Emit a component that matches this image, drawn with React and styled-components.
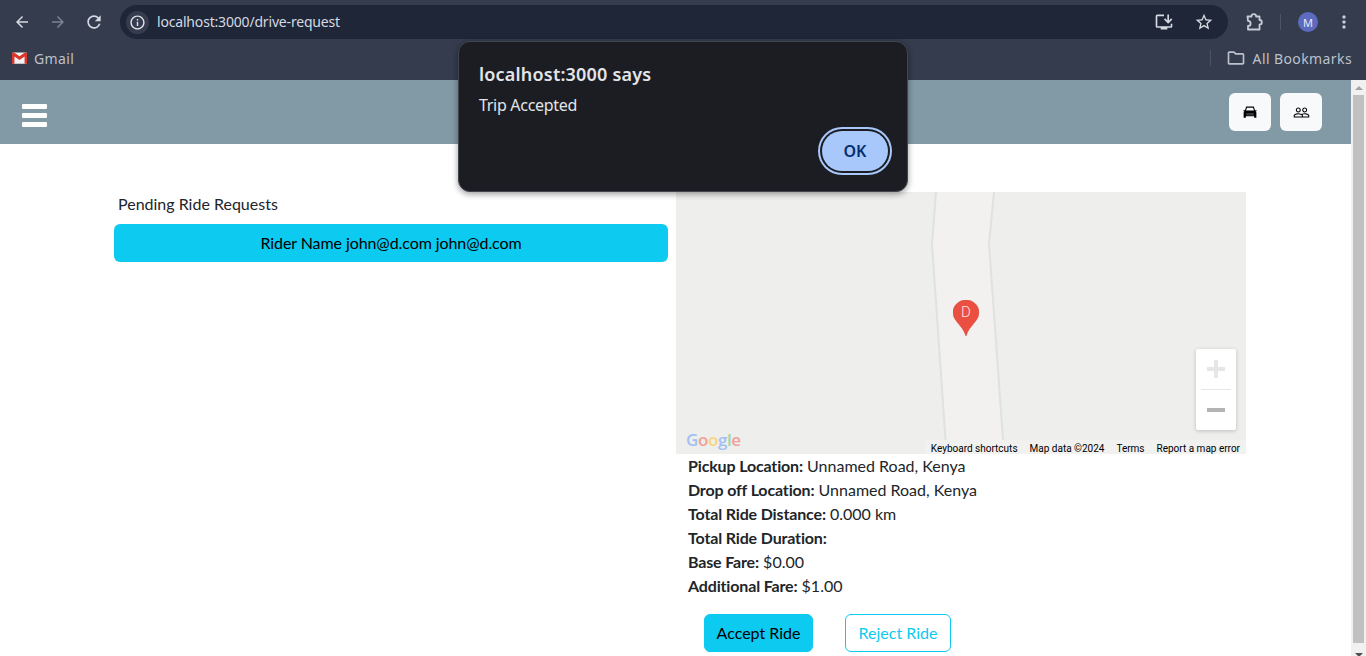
import React from 'react';
import styled, {createGlobalStyle} from 'styled-components';
import {
    MdArrowBack, MdArrowForward, MdRefresh, MdInfoOutline, MdStarBorder,
    MdMoreVert, MdOutlineFolder, MdOutlineInstallDesktop, MdPeopleOutline
} from 'react-icons/md';

const GlobalStyle = createGlobalStyle`
  html, body {
    margin: 0;
    padding: 0;
    height: 100%;
    overflow: hidden;
    background: #fff;
  }
  * {
    box-sizing: border-box;
  }
`;

const rideDetails = [
    {label: "Pickup Location:", value: "Unnamed Road, Kenya"},
    {label: "Drop off Location:", value: "Unnamed Road, Kenya"},
    {label: "Total Ride Distance:", value: "0.000 km"},
    {label: "Total Ride Duration:", value: ""},
    {label: "Base Fare:", value: "$0.00"},
    {label: "Additional Fare:", value: "$1.00"},
];

function GmailIcon() {
    return (
        <svg width="15" height="12" viewBox="0 0 16 12">
            <rect x="0" y="0" width="16" height="12" rx="1.5" fill="#f2f2f2" />
            <path d="M0 1.5 L0 12 L2.6 12 L2.6 4.4 L8 8.2 L13.4 4.4 L13.4 12 L16 12 L16 1.5 Q16 0 14.5 0 L13.8 0 L8 4.2 L2.2 0 L1.5 0 Q0 0 0 1.5 Z" fill="#d9372c" />
        </svg>
    );
}

function ExtensionIcon() {
    return (
        <svg width="20" height="20" viewBox="0 0 20 20" fill="none" stroke="currentColor" strokeWidth="1.8" strokeLinejoin="round">
            <path d="M3.5 4.5 H7.5 a2.3 2.3 0 0 1 4.6 0 H15.5 V8 a2.3 2.3 0 0 1 0 4.6 V17.5 H4 V14 a2.6 2.6 0 0 0 0 -5.2 Z" />
        </svg>
    );
}

function CarIcon() {
    return (
        <svg width="14" height="12" viewBox="0 0 15 13">
            <path d="M3.4 0.6 H11.6 L13 4.6 H14.6 V5.8 H13.6 L14.4 7 V12.6 H12 V11.2 H3 V12.6 H0.6 V7 L1.4 5.8 H0.4 V4.6 H2 Z M4.2 1.8 L3.2 4.8 H11.8 L10.8 1.8 Z" fill="#000" fillRule="evenodd" />
            <path d="M3.4 8.4 H11.6 M3.4 9.8 H11.6" stroke="#777" strokeWidth="0.7" />
        </svg>
    );
}

function Browser() {
    return (
        <Chrome>
            <Toolbar>
                <NavButton><MdArrowBack size={18} /></NavButton>
                <NavButton $disabled><MdArrowForward size={18} /></NavButton>
                <NavButton><MdRefresh size={20} /></NavButton>
                <UrlBar>
                    <InfoBadge><MdInfoOutline size={17} /></InfoBadge>
                    <UrlText>localhost:3000/drive-request</UrlText>
                    <UrlActions>
                        <MdOutlineInstallDesktop size={20} />
                        <MdStarBorder size={20} />
                    </UrlActions>
                </UrlBar>
                <ToolbarEnd>
                    <ExtensionIcon />
                    <Divider />
                    <Avatar>M</Avatar>
                    <MdMoreVert size={20} />
                </ToolbarEnd>
            </Toolbar>
            <BookmarkBar>
                <Bookmark>
                    <GmailIcon />
                    Gmail
                </Bookmark>
                <BookmarkEnd>
                    <BookmarkDivider />
                    <Bookmark>
                        <MdOutlineFolder size={20} />
                        All Bookmarks
                    </Bookmark>
                </BookmarkEnd>
            </BookmarkBar>
        </Chrome>
    );
}

function MapView() {
    return (
        <MapBox>
            <Roads viewBox="0 0 570 262" preserveAspectRatio="none">
                <path d="M260 0 L256 52 L270.5 262 L328 262 L313 52 L318 0 Z" fill="#f2f1ef" />
                <path d="M260 0 L256 52 L270.5 262" fill="none" stroke="#dfe2df" strokeWidth="2" />
                <path d="M318 0 L313 52 L328 262" fill="none" stroke="#dfe2df" strokeWidth="2" />
            </Roads>
            <Marker>
                <svg width="26" height="36" viewBox="0 0 26 36">
                    <path d="M13 0 C5.8 0 0 5.6 0 12.6 C0 21 9.5 25 13 36 C16.5 25 26 21 26 12.6 C26 5.6 20.2 0 13 0 Z" fill="#ea4f42" stroke="#d33b2e" strokeWidth="0.5" />
                </svg>
                <MarkerLabel>D</MarkerLabel>
            </Marker>
            <ZoomControl>
                <ZoomKey>
                    <svg width="18" height="18" viewBox="0 0 18 18"><path d="M7 0h4v7h7v4h-7v7H7v-7H0V7h7z" fill="#e6e6e6" /></svg>
                </ZoomKey>
                <ZoomLine />
                <ZoomKey>
                    <svg width="18" height="18" viewBox="0 0 18 18"><path d="M0 7h18v4H0z" fill="#b3b3b3" /></svg>
                </ZoomKey>
            </ZoomControl>
            <GoogleMark>
                <span style={{color: "#a3c0f4"}}>G</span>
                <span style={{color: "#f2a097"}}>o</span>
                <span style={{color: "#f7d67f"}}>o</span>
                <span style={{color: "#a3c0f4"}}>g</span>
                <span style={{color: "#9fd4a9"}}>l</span>
                <span style={{color: "#f2a097"}}>e</span>
            </GoogleMark>
            <Attribution>
                <AttrItem>Keyboard shortcuts</AttrItem>
                <AttrItem>Map data ©2024</AttrItem>
                <AttrItem>Terms</AttrItem>
                <AttrItem>Report a map error</AttrItem>
            </Attribution>
        </MapBox>
    );
}

function App() {
    return (
        <Screen>
            <GlobalStyle />
            <Browser />
            <Viewport>
                <Page>
                    <TopBar>
                        <Hamburger><i /><i /><i /></Hamburger>
                        <TopActions>
                            <IconButton><CarIcon /></IconButton>
                            <IconButton><MdPeopleOutline size={17} /></IconButton>
                        </TopActions>
                    </TopBar>
                    <Content>
                        <Requests>
                            <RequestsTitle>Pending Ride Requests</RequestsTitle>
                            <RiderButton>Rider Name john@d.com john@d.com</RiderButton>
                        </Requests>
                        <Details>
                            <MapView />
                            <DetailList>
                                {rideDetails.map(item => (
                                    <DetailRow key={item.label}>
                                        <b>{item.label}</b> {item.value}
                                    </DetailRow>
                                ))}
                            </DetailList>
                            <Actions>
                                <AcceptButton>Accept Ride</AcceptButton>
                                <RejectButton>Reject Ride</RejectButton>
                            </Actions>
                        </Details>
                    </Content>
                </Page>
                <Scrollbar>
                    <ArrowUp />
                    <Thumb />
                    <ArrowDown />
                </Scrollbar>
            </Viewport>
            <Dialog>
                <DialogTitle>localhost:3000 says</DialogTitle>
                <DialogText>Trip Accepted</DialogText>
                <DialogFooter>
                    <OkButton>OK</OkButton>
                </DialogFooter>
            </Dialog>
        </Screen>
    );
}

const Screen = styled.div`
  position: relative;
  width: 1366px;
  height: 656px;
  display: flex;
  flex-direction: column;
  overflow: hidden;
  font-family: Lato, "Liberation Sans", sans-serif;
`;

const Chrome = styled.header`
  flex: none;
  height: 80px;
  background: #343c4e;
  color: #c7ccd6;
  font-family: "Noto Sans", sans-serif;
`;

const Toolbar = styled.div`
  height: 44px;
  display: flex;
  align-items: center;
  padding: 0 0 0 4px;
`;

const NavButton = styled.span`
  width: 36px;
  height: 36px;
  display: flex;
  align-items: center;
  justify-content: center;
  color: ${props => props.$disabled ? "#7b8291" : "#d5d9e1"};
`;

const UrlBar = styled.div`
  width: 1108px;
  height: 34px;
  margin-left: 8px;
  padding: 0 14px 0 6px;
  display: flex;
  align-items: center;
  border-radius: 17px;
  background: #1e2638;
`;

const InfoBadge = styled.span`
  width: 23px;
  height: 23px;
  display: flex;
  align-items: center;
  justify-content: center;
  border-radius: 50%;
  background: #343c4e;
  color: #e3e6ec;
`;

const UrlText = styled.span`
  margin-left: 8px;
  padding-bottom: 2px;
  font-size: 14px;
  letter-spacing: -0.18px;
  color: #d5d9e1;
`;

const UrlActions = styled.span`
  margin-left: auto;
  display: flex;
  align-items: center;
  gap: 20px;
  color: #d5d9e1;
`;

const ToolbarEnd = styled.div`
  display: flex;
  align-items: center;
  color: #c7ccd6;
  margin-left: 16px;
`;

const Divider = styled.span`
  width: 1px;
  height: 16px;
  margin: 0 17px 0 16px;
  background: #4b5365;
`;

const Avatar = styled.span`
  width: 20px;
  height: 20px;
  margin-right: 16px;
  display: flex;
  align-items: center;
  justify-content: center;
  border-radius: 50%;
  background: #5c6bc0;
  color: #e8eaf6;
  font-size: 11px;
`;

const BookmarkBar = styled.div`
  height: 36px;
  display: flex;
  align-items: center;
  justify-content: space-between;
  padding: 0 14px 8px 12px;
`;

const Bookmark = styled.span`
  display: flex;
  align-items: center;
  gap: 7px;
  font-size: 14px;
  letter-spacing: 0.4px;
  color: #bcc1cc;
`;

const BookmarkEnd = styled.div`
  display: flex;
  align-items: center;
  gap: 15px;
`;

const BookmarkDivider = styled.span`
  width: 1px;
  height: 16px;
  background: #4b5365;
`;

const Viewport = styled.div`
  flex: 1;
  min-height: 0;
  display: flex;
`;

const Page = styled.main`
  flex: 1;
  min-width: 0;
  background: #fff;
  color: #212529;
`;

const TopBar = styled.div`
  height: 64px;
  display: flex;
  align-items: center;
  justify-content: space-between;
  padding: 0 29px 0 22px;
  background: #829aa5;
`;

const Hamburger = styled.div`
  width: 25px;
  height: 23px;
  margin-top: 6px;
  display: flex;
  flex-direction: column;
  justify-content: space-between;

  i {
    display: block;
    height: 5px;
    border-radius: 1px;
    background: #fff;
  }
`;

const TopActions = styled.div`
  display: flex;
  gap: 9px;
`;

const IconButton = styled.button`
  width: 42px;
  height: 38px;
  padding: 0;
  display: flex;
  align-items: center;
  justify-content: center;
  border: 0;
  border-radius: 6px;
  background: #f8f9fa;
  color: #000;
`;

const Content = styled.div`
  display: flex;
  align-items: flex-start;
  gap: 8px;
  padding: 48px 0 0 114px;
`;

const Requests = styled.section`
  width: 554px;
`;

const RequestsTitle = styled.div`
  height: 32px;
  padding: 0 0 0 4px;
  font-size: 16px;
  line-height: 24px;
`;

const RiderButton = styled.button`
  display: block;
  width: 100%;
  height: 38px;
  padding: 0 0 2px;
  border: 0;
  border-radius: 6px;
  background: #0dcaf0;
  color: #000;
  font-family: inherit;
  font-size: 16px;
  letter-spacing: -0.08px;
`;

const Details = styled.section`
  width: 570px;
`;

const MapBox = styled.div`
  position: relative;
  height: 262px;
  overflow: hidden;
  background: #eeeeec;
`;

const Roads = styled.svg`
  position: absolute;
  inset: 0;
  width: 100%;
  height: 100%;
`;

const Marker = styled.div`
  position: absolute;
  left: 277px;
  top: 108px;
  width: 26px;
  height: 36px;
`;

const MarkerLabel = styled.span`
  position: absolute;
  top: 3px;
  left: 0;
  width: 100%;
  text-align: center;
  font-family: Roboto, sans-serif;
  font-size: 15px;
  font-weight: 300;
  color: #fde4e1;
`;

const ZoomControl = styled.div`
  position: absolute;
  right: 10px;
  top: 157px;
  width: 40px;
  height: 81px;
  display: flex;
  flex-direction: column;
  align-items: center;
  border-radius: 2px;
  background: #fff;
  box-shadow: 0 1px 4px rgba(0, 0, 0, 0.2);
`;

const ZoomKey = styled.span`
  flex: 1;
  display: flex;
  align-items: center;
  justify-content: center;
`;

const ZoomLine = styled.span`
  width: 30px;
  height: 1px;
  background: #e6e6e6;
`;

const GoogleMark = styled.div`
  position: absolute;
  left: 10px;
  bottom: 2px;
  font-family: "Open Sans", sans-serif;
  font-size: 17px;
  font-weight: 600;
  line-height: 24px;
  letter-spacing: -0.4px;
`;

const Attribution = styled.div`
  position: absolute;
  right: 0;
  bottom: 0;
  height: 14px;
  display: flex;
  font-family: Roboto, sans-serif;
  font-size: 10px;
  line-height: 17px;
  color: #000;
`;

const AttrItem = styled.span`
  padding: 0 6px;
  background: #f1f1ef;
`;

const DetailList = styled.div`
  padding-left: 12px;
`;

const DetailRow = styled.div`
  height: 24px;
  font-size: 16px;
  line-height: 24px;

  b {
    font-weight: 700;
    letter-spacing: -0.15px;
  }
`;

const Actions = styled.div`
  display: flex;
  gap: 32px;
  padding: 16px 0 0 28px;
`;

const AcceptButton = styled.button`
  width: 109px;
  height: 38px;
  padding: 0 0 2px;
  border: 1px solid #0dcaf0;
  border-radius: 6px;
  background: #0dcaf0;
  color: #000;
  font-family: inherit;
  font-size: 16px;
`;

const RejectButton = styled(AcceptButton)`
  width: 106px;
  background: #fff;
  color: #0dcaf0;
`;

const Scrollbar = styled.div`
  flex: none;
  width: 15px;
  height: 592px;
  display: flex;
  flex-direction: column;
  align-items: center;
  background: #f1f1f1;
`;

const ArrowUp = styled.span`
  margin-top: 6px;
  width: 0;
  height: 0;
  border-left: 4px solid transparent;
  border-right: 4px solid transparent;
  border-bottom: 4px solid #a3a3a3;
`;

const Thumb = styled.span`
  width: 11px;
  height: 548px;
  margin-top: 5px;
  background: #c1c1c1;
`;

const ArrowDown = styled.span`
  margin-top: 10px;
  width: 0;
  height: 0;
  border-left: 4px solid transparent;
  border-right: 4px solid transparent;
  border-top: 4px solid #505050;
`;

const Dialog = styled.div`
  position: absolute;
  left: 458px;
  top: 41px;
  width: 450px;
  height: 151px;
  padding: 20px 19px 0 20px;
  border: 1px solid #42454d;
  border-radius: 12px;
  background: #1b1d22;
  color: #e3e5e9;
  font-family: "Noto Sans", sans-serif;
  box-shadow: 0 2px 6px rgba(0, 0, 0, 0.4);
`;

const DialogTitle = styled.div`
  font-size: 18px;
  line-height: 24px;
  font-weight: 600;
  letter-spacing: 0.2px;
`;

const DialogText = styled.div`
  margin-top: 8px;
  font-size: 16px;
  line-height: 22px;
  letter-spacing: -0.3px;
`;

const DialogFooter = styled.div`
  display: flex;
  justify-content: flex-end;
  margin-top: 15px;
`;

const OkButton = styled.button`
  width: 66px;
  height: 40px;
  border: 0;
  border-radius: 20px;
  background: #a8c7fa;
  color: #062e6f;
  font-family: inherit;
  font-size: 16px;
  font-weight: 600;
  box-shadow: 0 0 0 2px #1b1d22, 0 0 0 4px #a8c7fa;
`;

export default App;
